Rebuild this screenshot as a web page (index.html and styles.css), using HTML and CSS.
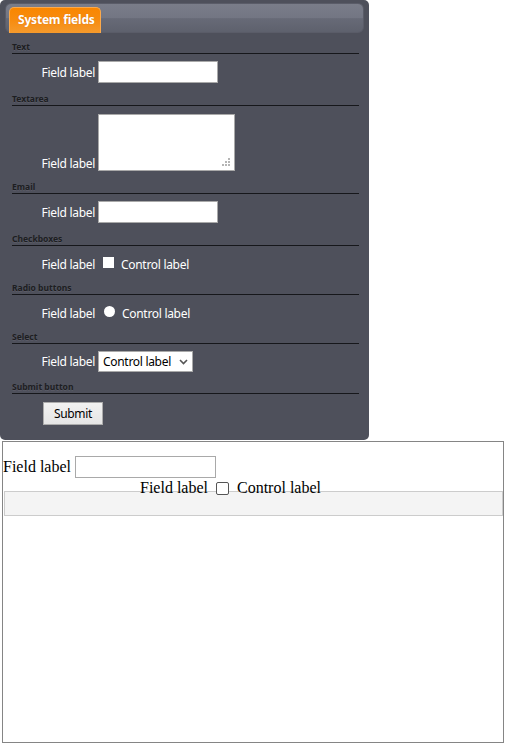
FILE: index.html
```html
<!DOCTYPE html>
<html>
<head>
<meta charset="utf-8">
<link rel="stylesheet" href="styles.css">
</head>
<body>
<div class="panel">
  <div class="tabbar">
    <div class="tab">System fields</div>
  </div>

  <div class="sec">Text</div>
  <div class="row row-input">
    <span class="lbl">Field label</span>
    <span class="input"></span>
  </div>

  <div class="sec">Textarea</div>
  <div class="row row-area">
    <span class="lbl">Field label</span>
    <span class="area">
      <svg class="grip" width="8" height="8" viewBox="0 0 8 8"><rect x="6" y="0" width="2" height="2"/><rect x="3" y="3" width="2" height="2"/><rect x="6" y="3" width="2" height="2"/><rect x="0" y="6" width="2" height="2"/><rect x="3" y="6" width="2" height="2"/><rect x="6" y="6" width="2" height="2"/></svg>
    </span>
  </div>

  <div class="sec">Email</div>
  <div class="row row-input">
    <span class="lbl">Field label</span>
    <span class="input"></span>
  </div>

  <div class="sec">Checkboxes</div>
  <div class="row row-check">
    <span class="lbl">Field label</span>
    <span class="cbox"></span>
    <span class="clbl">Control label</span>
  </div>

  <div class="sec">Radio buttons</div>
  <div class="row row-check">
    <span class="lbl">Field label</span>
    <span class="radio"></span>
    <span class="clbl">Control label</span>
  </div>

  <div class="sec">Select</div>
  <div class="row row-select">
    <span class="lbl">Field label</span>
    <span class="select">Control label
      <svg class="chev" width="9" height="6" viewBox="0 0 9 6"><path d="M1 1 L4.5 4.5 L8 1" fill="none" stroke="#555" stroke-width="1.6"/></svg>
    </span>
  </div>

  <div class="sec sec-last">Submit button</div>
  <div class="row row-button">
    <span class="button">Submit</span>
  </div>
</div>

<div class="plain">
  <div class="prow">
    <span>Field label</span>
    <span class="pinput"></span>
  </div>
  <div class="prow2">
    <span>Field label</span>
    <span class="pcheck"></span>
    <span>Control label</span>
  </div>
  <div class="band"></div>
</div>
</body>
</html>
```
FILE: styles.css
```css
html, body {
  margin: 0;
  padding: 0;
  background: #ffffff;
}

.panel {
  width: 369px;
  box-sizing: border-box;
  background: #4e505b;
  border-radius: 5px;
  padding: 3px 0 15px 0;
  font-family: "Noto Sans", "Open Sans", sans-serif;
  color: #ffffff;
}

.tabbar {
  margin: 0 5px 0 5px;
  height: 30px;
  box-sizing: border-box;
  border-radius: 6px;
  border: 1px solid #5a5c68;
  background: linear-gradient(to bottom, #7a7d89 0%, #737683 50%, #676a77 52%, #5e616d 100%);
  padding: 3px 0 0 3px;
  display: flex;
  align-items: flex-end;
}

.tab {
  height: 26px;
  box-sizing: border-box;
  width: 92px;
  margin-bottom: -1px;
  border-radius: 5px 5px 0 0;
  border: 1px solid #fba94b;
  border-bottom: none;
  background: linear-gradient(to bottom, #f98600 0%, #f78c10 50%, #f59a2c 100%);
  font-weight: bold;
  font-size: 12px;
  letter-spacing: -0.2px;
  line-height: 24px;
  padding-left: 8px;
  color: #ffffff;
  text-shadow: 0 0 1px rgba(160, 70, 0, 0.4);
}

.sec {
  margin: 11px 10px 0 12px;
  height: 12px;
  box-sizing: border-box;
  border-bottom: 1px solid #16171b;
  font-size: 8.5px;
  font-weight: bold;
  line-height: 10px;
  color: #1d1e22;
  text-shadow: 0 1px 0 rgba(255, 255, 255, 0.08);
}

.tabbar + .sec {
  margin-top: 9px;
}

.sec-last {
  margin-top: 10px;
}

.row {
  display: flex;
  align-items: center;
  margin-top: 7px;
  font-size: 12px;
  letter-spacing: -0.3px;
}

.lbl {
  width: 95px;
  text-align: right;
  line-height: 15px;
  flex: none;
}

.row-input { height: 22px; }
.row-area { height: 57px; margin-top: 8px; align-items: flex-end; }
.row-check { height: 19px; }
.row-select { height: 21px; }
.row-button { height: 23px; margin-top: 8px; }

.row-check .lbl,
.row-check .clbl {
  padding-top: 3px;
}

.input {
  margin-left: 3px;
  width: 120px;
  height: 22px;
  box-sizing: border-box;
  background: #ffffff;
  border: 1px solid #a9a9a9;
}

.area {
  margin-left: 3px;
  width: 137px;
  height: 57px;
  box-sizing: border-box;
  background: #ffffff;
  border: 1px solid #a9a9a9;
  display: flex;
  justify-content: flex-end;
  align-items: flex-end;
  padding: 0 4px 4px 0;
}

.grip { fill: #b5b5b5; display: block; }

.cbox {
  margin-left: 8px;
  width: 11px;
  height: 11px;
  background: #ffffff;
  flex: none;
}

.radio {
  margin-left: 9px;
  width: 11px;
  height: 11px;
  border-radius: 50%;
  background: #ffffff;
  flex: none;
}

.clbl {
  margin-left: 7px;
  line-height: 15px;
}

.select {
  margin-left: 3px;
  width: 95px;
  height: 21px;
  box-sizing: border-box;
  background: #ffffff;
  border: 1px solid #a9a9a9;
  color: #000000;
  display: flex;
  align-items: center;
  justify-content: space-between;
  padding: 0 4px 0 4px;
}

.chev { display: block; }

.button {
  margin-left: 43px;
  width: 60px;
  height: 23px;
  box-sizing: border-box;
  border: 1px solid #acacac;
  background: linear-gradient(to bottom, #f2f2f2, #e5e5e5);
  color: #000000;
  display: flex;
  align-items: center;
  justify-content: center;
}

.plain {
  margin: 1px 0 0 2px;
  width: 502px;
  height: 302px;
  box-sizing: border-box;
  border: 1px solid #858585;
  font-family: "Liberation Serif", "Times New Roman", serif;
  font-size: 16px;
  color: #000000;
}

.prow {
  display: flex;
  align-items: center;
  margin-top: 14px;
  height: 22px;
}

.pinput {
  margin-left: 4px;
  width: 141px;
  height: 22px;
  box-sizing: border-box;
  border: 1px solid #a9a9a9;
  background: #ffffff;
}

.prow2 {
  position: relative;
  z-index: 1;
  display: flex;
  align-items: center;
  height: 18px;
  line-height: 18px;
  padding-left: 137px;
  padding-top: 1px;
}

.pcheck {
  width: 13px;
  height: 13px;
  box-sizing: border-box;
  border: 1px solid #555555;
  border-radius: 2px;
  background: #ffffff;
  margin: 0 8px 0 8px;
}

.band {
  margin: -6px 0 0 1px;
  width: 499px;
  height: 25px;
  box-sizing: border-box;
  border: 1px solid #cccccc;
  background: #f4f4f4;
}
```
